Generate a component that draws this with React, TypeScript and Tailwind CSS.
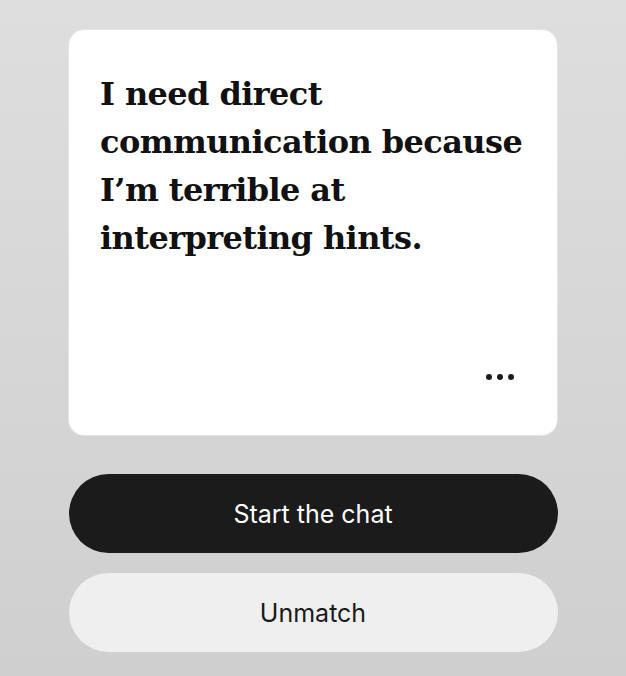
import React from "react";

const serif = { fontFamily: '"DejaVu Serif", "Liberation Serif", serif' };

export default function App() {
  return (
    <div className="w-[626px] h-[676px] overflow-hidden bg-gradient-to-b from-[#dedede] to-[#cfcfcf] flex flex-col items-center">
      <div className="mt-[29px] w-[490px] h-[407px] rounded-[16px] bg-white border border-[#e4e4e4] flex flex-col justify-between px-[31px] pt-[40px] pb-[55px]">
        <p
          className="text-[32px] leading-[48px] font-bold text-[#111] tracking-[-0.6px]"
          style={serif}
        >
          I need direct communication because I’m terrible at interpreting hints.
        </p>
        <div className="flex justify-end gap-[5px] pr-[12px]">
          <span className="w-[6px] h-[6px] rounded-full bg-[#1b1b1b]" />
          <span className="w-[6px] h-[6px] rounded-full bg-[#1b1b1b]" />
          <span className="w-[6px] h-[6px] rounded-full bg-[#1b1b1b]" />
        </div>
      </div>
      <button className="mt-[38px] w-[489px] h-[79px] pt-[3px] rounded-full bg-[#1b1b1b] text-white text-[25px] font-['Inter',sans-serif]">
        Start the chat
      </button>
      <button className="mt-[20px] w-[489px] h-[79px] pt-[3px] rounded-full bg-[#efefef] text-[#1b1b1b] text-[25px] font-['Inter',sans-serif]">
        Unmatch
      </button>
    </div>
  );
}
